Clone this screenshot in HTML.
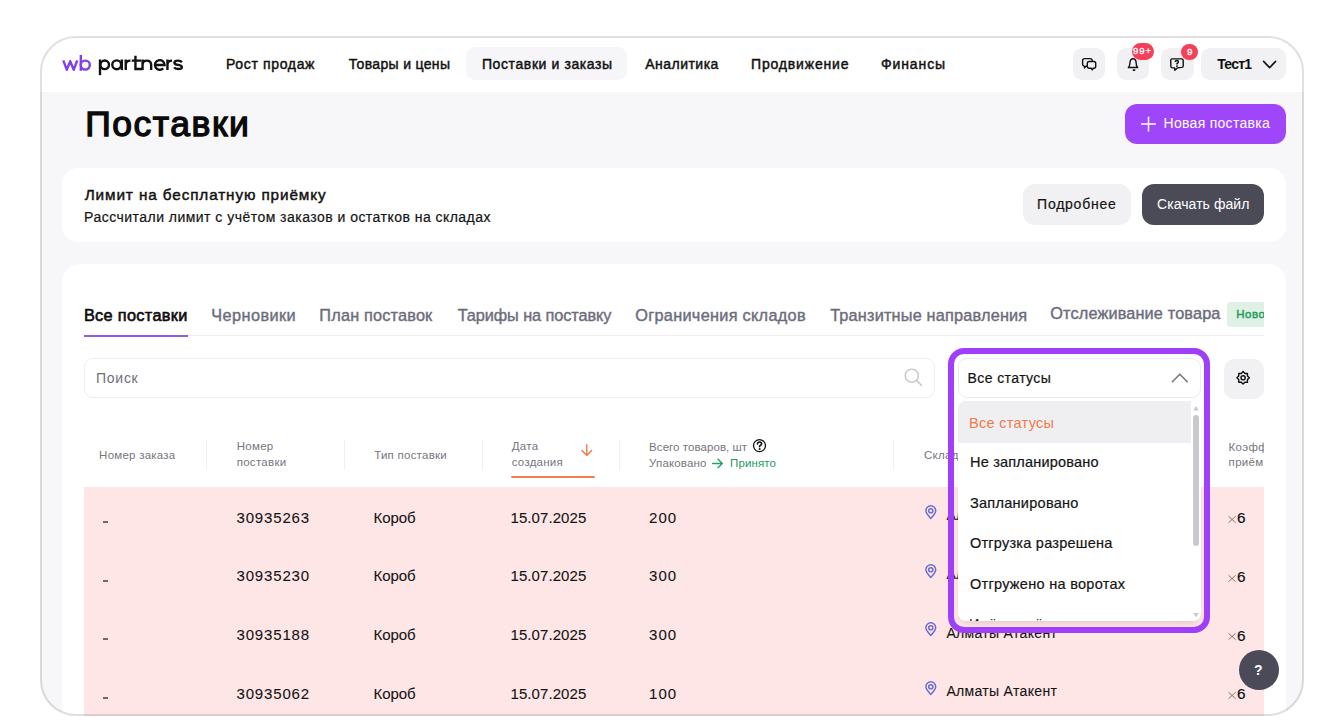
<!DOCTYPE html>
<html><head><meta charset="utf-8">
<style>
*{box-sizing:border-box;margin:0;padding:0}
html,body{width:1344px;height:724px;overflow:hidden;background:#fff}
body{position:relative;font-family:"Liberation Sans",sans-serif;color:#111}
.a{position:absolute;white-space:nowrap;line-height:1;z-index:5}
.b{position:absolute}
#clip{position:absolute;left:0;top:0;width:1344px;height:724px;background:#f7f7f9;clip-path:inset(36px 40px 8px 40px round 36px)}
#frameb{position:absolute;left:40px;top:36px;width:1264px;height:680px;border-radius:36px;border:2px solid rgba(0,0,0,0.12);z-index:60}
.nav{color:#111;-webkit-text-stroke:0.45px #111}
.userT{color:#111;font-weight:700}
.title{color:#0a0a0a;-webkit-text-stroke:1.3px #0a0a0a}
.wt{color:#fff}
.semi{color:#111;-webkit-text-stroke:0.45px #111}
.reg{color:#141414;-webkit-text-stroke:0.2px #141414}
.tab{color:#6c6c7c;-webkit-text-stroke:0.4px #6c6c7c}
.tabA{color:#0c0c0c;-webkit-text-stroke:0.6px #0c0c0c}
.ph{color:#6f6f78}
.ddA{color:#ef7b4c}
.th{color:#76767e}
.thG{color:#1c9a5e}
.cell{color:#141414;-webkit-text-stroke:0.1px #141414}
.cellB{color:#111;-webkit-text-stroke:0.2px #111}
.ib{position:absolute;background:#f1f1f3;border-radius:9px}
svg{position:absolute;overflow:visible}
</style></head><body>
<div id="clip">
  <!-- header -->
  <div class="b" style="left:40px;top:36px;width:1264px;height:56px;background:#fff"></div>
  <div class="b" style="left:466px;top:47px;width:161px;height:33px;background:#f6f6f8;border-radius:9px"></div>
  <div class="ib" style="left:1072.5px;top:48px;width:32.5px;height:32px"></div>
  <div class="ib" style="left:1117px;top:48px;width:32px;height:32px"></div>
  <div class="ib" style="left:1161px;top:48px;width:32.5px;height:32px"></div>
  <div class="ib" style="left:1201px;top:48px;width:85px;height:32px"></div>
  <!-- cards -->
  <div class="b" style="left:1125px;top:104px;width:161px;height:40px;background:#a046fa;border-radius:12px"></div>
  <div class="b" style="left:61.5px;top:168px;width:1224.5px;height:74px;background:#fff;border-radius:16px"></div>
  <div class="b" style="left:1022.5px;top:184px;width:108.5px;height:40.5px;background:#f1f1f3;border-radius:12px"></div>
  <div class="b" style="left:1142px;top:184px;width:122px;height:40.5px;background:#4b4b58;border-radius:12px"></div>
  <div class="b" style="left:62px;top:264px;width:1224px;height:500px;background:#fff;border-radius:18px"></div>
  <!-- tabs -->
  <div class="b" style="left:84px;top:335px;width:1180px;height:1px;background:#ededf0"></div>
  <div class="b" style="left:84px;top:334.5px;width:104px;height:2px;background:#8f5be8"></div>
  <div class="b" style="left:1226.5px;top:302px;width:37.5px;height:24.5px;background:#dff1e5;border-radius:4px 0 0 4px"></div>
  <div class="a" style="left:1236.3px;top:309px;font-size:11.5px;color:#1f9b5d;-webkit-text-stroke:0.45px #1f9b5d;letter-spacing:0.5px;width:27.7px;overflow:hidden">Новое</div>
  <!-- search -->
  <div class="b" style="left:84px;top:358px;width:851px;height:40px;background:#fff;border:1px solid #eeeef1;border-radius:9px"></div>
  <svg style="left:0;top:0" width="1" height="1"><circle cx="911.8" cy="375.7" r="6.6" fill="none" stroke="#c6c6ca" stroke-width="1.4"/><line x1="916.6" y1="380.5" x2="921.4" y2="385.3" stroke="#c6c6ca" stroke-width="1.5" stroke-linecap="round"/></svg>
  <!-- gear -->
  <div class="b" style="left:1224px;top:358.5px;width:40px;height:40px;background:#f1f1f3;border-radius:10px"></div>
  <!-- table header -->
  <div class="b" style="left:206px;top:440px;width:1px;height:30px;background:#f1f1f4"></div>
  <div class="b" style="left:343.5px;top:440px;width:1px;height:30px;background:#f1f1f4"></div>
  <div class="b" style="left:481.5px;top:440px;width:1px;height:30px;background:#f1f1f4"></div>
  <div class="b" style="left:619px;top:440px;width:1px;height:30px;background:#f1f1f4"></div>
  <div class="b" style="left:893px;top:440px;width:1px;height:30px;background:#f1f1f4"></div>
  <div class="b" style="left:511.2px;top:475.8px;width:83.5px;height:2px;background:#f08050;border-radius:1px"></div>
  <svg style="left:0;top:0" width="1" height="1">
    <path d="M586.8 444.8 V455.4 M582 450.6 L586.8 455.4 L591.6 450.6" fill="none" stroke="#f07a48" stroke-width="1.4" stroke-linecap="round" stroke-linejoin="round"/>
    <circle cx="759.5" cy="445.6" r="6" fill="none" stroke="#111" stroke-width="1.3"/>
    <path d="M757.5 444 Q757.6 442 759.6 442 Q761.6 442 761.6 443.9 Q761.5 445.2 759.6 446 V446.7" fill="none" stroke="#111" stroke-width="1.6" stroke-linecap="round"/>
    <circle cx="759.6" cy="449" r="1" fill="#111"/>
    <path d="M712.6 463.5 H722.3 M718 459.2 L722.3 463.5 L718 467.8" fill="none" stroke="#25a168" stroke-width="1.4" stroke-linecap="round" stroke-linejoin="round"/>
  </svg>
  <!-- rows -->
  <div class="b" style="left:84px;top:487px;width:1180px;height:240px;background:#ffe6e6"></div>
  <div class="b" style="left:103px;top:521px;width:5px;height:1.5px;background:#726670"></div>
<svg style="left:0;top:0.00px" width="1" height="1"><g fill="none" stroke="#646ad8" stroke-width="1.45"><path d="M930.8 518.4 C928.2 515.6 925.9 513.3 925.9 510.7 A4.9 4.9 0 0 1 935.7 510.7 C935.7 513.3 933.4 515.6 930.8 518.4 Z" stroke-linejoin="round"/><circle cx="930.8" cy="510.8" r="2.1"/></g></svg>
<svg style="left:0;top:0.00px" width="1" height="1"><path d="M1228.5 516.3 L1235.6 522.7 M1235.6 516.3 L1228.5 522.7" stroke="#75686e" stroke-width="0.9"/></svg>
<div class="b" style="left:103px;top:580px;width:5px;height:1.5px;background:#726670"></div>
<svg style="left:0;top:58.70px" width="1" height="1"><g fill="none" stroke="#646ad8" stroke-width="1.45"><path d="M930.8 518.4 C928.2 515.6 925.9 513.3 925.9 510.7 A4.9 4.9 0 0 1 935.7 510.7 C935.7 513.3 933.4 515.6 930.8 518.4 Z" stroke-linejoin="round"/><circle cx="930.8" cy="510.8" r="2.1"/></g></svg>
<svg style="left:0;top:58.70px" width="1" height="1"><path d="M1228.5 516.3 L1235.6 522.7 M1235.6 516.3 L1228.5 522.7" stroke="#75686e" stroke-width="0.9"/></svg>
<div class="b" style="left:103px;top:638px;width:5px;height:1.5px;background:#726670"></div>
<svg style="left:0;top:117.40px" width="1" height="1"><g fill="none" stroke="#646ad8" stroke-width="1.45"><path d="M930.8 518.4 C928.2 515.6 925.9 513.3 925.9 510.7 A4.9 4.9 0 0 1 935.7 510.7 C935.7 513.3 933.4 515.6 930.8 518.4 Z" stroke-linejoin="round"/><circle cx="930.8" cy="510.8" r="2.1"/></g></svg>
<svg style="left:0;top:117.40px" width="1" height="1"><path d="M1228.5 516.3 L1235.6 522.7 M1235.6 516.3 L1228.5 522.7" stroke="#75686e" stroke-width="0.9"/></svg>
<div class="b" style="left:103px;top:697px;width:5px;height:1.5px;background:#726670"></div>
<svg style="left:0;top:176.10px" width="1" height="1"><g fill="none" stroke="#646ad8" stroke-width="1.45"><path d="M930.8 518.4 C928.2 515.6 925.9 513.3 925.9 510.7 A4.9 4.9 0 0 1 935.7 510.7 C935.7 513.3 933.4 515.6 930.8 518.4 Z" stroke-linejoin="round"/><circle cx="930.8" cy="510.8" r="2.1"/></g></svg>
<svg style="left:0;top:176.10px" width="1" height="1"><path d="M1228.5 516.3 L1235.6 522.7 M1235.6 516.3 L1228.5 522.7" stroke="#75686e" stroke-width="0.9"/></svg>
  <div id="nav1" class="a nav" style="left:225.96px;top:56.97px;font-size:14px;letter-spacing:0.652px">Рост продаж</div>
<div id="nav2" class="a nav" style="left:348.84px;top:56.97px;font-size:14px;letter-spacing:0.327px">Товары и цены</div>
<div id="nav3" class="a nav" style="left:481.96px;top:56.97px;font-size:14px;letter-spacing:0.600px">Поставки и заказы</div>
<div id="nav4" class="a nav" style="left:645.22px;top:56.97px;font-size:14px;letter-spacing:0.480px">Аналитика</div>
<div id="nav5" class="a nav" style="left:751.08px;top:56.97px;font-size:14px;letter-spacing:0.812px">Продвижение</div>
<div id="nav6" class="a nav" style="left:880.88px;top:56.97px;font-size:14px;letter-spacing:0.913px">Финансы</div>
<div id="user" class="a userT" style="left:1217.26px;top:57.17px;font-size:14px;letter-spacing:-0.780px">Тест1</div>
<div id="title" class="a title" style="left:85.14px;top:106.96px;font-size:35.5px;letter-spacing:1.557px">Поставки</div>
<div id="btnnew" class="a wt" style="left:1163.62px;top:116.37px;font-size:14px;letter-spacing:0.275px">Новая поставка</div>
<div id="lim1" class="a semi" style="left:84.70px;top:186.82px;font-size:15.3px;letter-spacing:0.885px">Лимит на бесплатную приёмку</div>
<div id="lim2" class="a reg" style="left:84.11px;top:210.00px;font-size:14px;letter-spacing:0.469px">Рассчитали лимит с учётом заказов и остатков на складах</div>
<div id="more" class="a reg" style="left:1037.08px;top:197.23px;font-size:14px;letter-spacing:0.760px">Подробнее</div>
<div id="dl" class="a wt" style="left:1157.08px;top:197.23px;font-size:14px;letter-spacing:0.053px">Скачать файл</div>
<div id="tab1" class="a tabA" style="left:83.92px;top:307.44px;font-size:16.3px;letter-spacing:0.329px">Все поставки</div>
<div id="tab2" class="a tab" style="left:211.34px;top:307.44px;font-size:16.3px;letter-spacing:0.420px">Черновики</div>
<div id="tab3" class="a tab" style="left:319.34px;top:307.44px;font-size:16.3px;letter-spacing:0.180px">План поставок</div>
<div id="tab4" class="a tab" style="left:457.64px;top:307.44px;font-size:16.3px;letter-spacing:-0.076px">Тарифы на поставку</div>
<div id="tab5" class="a tab" style="left:635.34px;top:307.44px;font-size:16.3px;letter-spacing:0.291px">Ограничения складов</div>
<div id="tab6" class="a tab" style="left:830.14px;top:307.44px;font-size:16.3px;letter-spacing:0.186px">Транзитные направления</div>
<div id="tab7" class="a tab" style="left:1050.24px;top:305.44px;font-size:16.3px;letter-spacing:0.144px">Отслеживание товара</div>
<div id="search" class="a ph" style="left:96.12px;top:371.21px;font-size:14px;letter-spacing:0.700px">Поиск</div>
<div id="th1" class="a th" style="left:99.11px;top:449.93px;font-size:11.5px;letter-spacing:0.242px">Номер заказа</div>
<div id="th2a" class="a th" style="left:236.65px;top:441.33px;font-size:11.5px;letter-spacing:0.300px">Номер</div>
<div id="th2b" class="a th" style="left:236.65px;top:457.21px;font-size:11.5px;letter-spacing:0.300px">поставки</div>
<div id="th3" class="a th" style="left:374.19px;top:449.93px;font-size:11.5px;letter-spacing:0.242px">Тип поставки</div>
<div id="th4a" class="a th" style="left:511.76px;top:441.23px;font-size:11.5px;letter-spacing:0.300px">Дата</div>
<div id="th4b" class="a th" style="left:511.76px;top:457.21px;font-size:11.5px;letter-spacing:0.243px">создания</div>
<div id="th5a" class="a th" style="left:649.11px;top:442.49px;font-size:11.5px;letter-spacing:0.060px">Всего товаров, шт</div>
<div id="th5b" class="a th" style="left:649.11px;top:458.15px;font-size:11.5px;letter-spacing:0.140px">Упаковано</div>
<div id="th5c" class="a thG" style="left:730.11px;top:458.15px;font-size:11.5px;letter-spacing:0.087px">Принято</div>
<div id="th6" class="a th" style="left:924.03px;top:449.93px;font-size:11.5px;letter-spacing:0.300px">Склад</div>
<div id="th7a" class="a th" style="left:1228.61px;top:442.43px;font-size:11.5px;letter-spacing:0.300px">Коэфф</div>
<div id="th7b" class="a th" style="left:1228.61px;top:457.35px;font-size:11.5px;letter-spacing:0.300px">приём</div>
<div id="r1n" class="a cell" style="left:236.44px;top:509.57px;font-size:15px;letter-spacing:0.849px">30935263</div>
<div class="a cell" style="left:236.44px;top:568.27px;font-size:15px;letter-spacing:0.849px">30935230</div>
<div class="a cell" style="left:236.44px;top:626.97px;font-size:15px;letter-spacing:0.849px">30935188</div>
<div class="a cell" style="left:236.44px;top:685.67px;font-size:15px;letter-spacing:0.849px">30935062</div>
<div id="r1t" class="a cell" style="left:373.48px;top:509.68px;font-size:15px;letter-spacing:-0.060px">Короб</div>
<div class="a cell" style="left:373.48px;top:568.38px;font-size:15px;letter-spacing:-0.060px">Короб</div>
<div class="a cell" style="left:373.48px;top:627.08px;font-size:15px;letter-spacing:-0.060px">Короб</div>
<div class="a cell" style="left:373.48px;top:685.78px;font-size:15px;letter-spacing:-0.060px">Короб</div>
<div id="r1d" class="a cell" style="left:510.56px;top:509.57px;font-size:15px;letter-spacing:0.069px">15.07.2025</div>
<div class="a cell" style="left:510.56px;top:568.27px;font-size:15px;letter-spacing:0.069px">15.07.2025</div>
<div class="a cell" style="left:510.56px;top:626.97px;font-size:15px;letter-spacing:0.069px">15.07.2025</div>
<div class="a cell" style="left:510.56px;top:685.67px;font-size:15px;letter-spacing:0.069px">15.07.2025</div>
<div id="r1q" class="a cell" style="left:648.94px;top:509.57px;font-size:15px;letter-spacing:1.100px">200</div>
<div class="a cell" style="left:648.94px;top:568.27px;font-size:15px;letter-spacing:1.100px">300</div>
<div class="a cell" style="left:648.94px;top:626.97px;font-size:15px;letter-spacing:1.100px">300</div>
<div class="a cell" style="left:648.94px;top:685.67px;font-size:15px;letter-spacing:1.100px">100</div>
<div id="r1c" class="a cell" style="left:946.38px;top:508.31px;font-size:14px;letter-spacing:0.325px">Алматы Атакент</div>
<div class="a cell" style="left:946.38px;top:567.01px;font-size:14px;letter-spacing:0.325px">Алматы Атакент</div>
<div class="a cell" style="left:946.38px;top:625.71px;font-size:14px;letter-spacing:0.325px">Алматы Атакент</div>
<div class="a cell" style="left:946.38px;top:684.41px;font-size:14px;letter-spacing:0.325px">Алматы Атакент</div>
<div id="r1k" class="a cellB" style="left:1236.89px;top:510.38px;font-size:15.3px;letter-spacing:0.000px">6</div>
<div class="a cellB" style="left:1236.89px;top:569.08px;font-size:15.3px;letter-spacing:0.000px">6</div>
<div class="a cellB" style="left:1236.89px;top:627.78px;font-size:15.3px;letter-spacing:0.000px">6</div>
<div class="a cellB" style="left:1236.89px;top:686.48px;font-size:15.3px;letter-spacing:0.000px">6</div>
  <div class="b" style="left:1264px;top:340px;width:22px;height:400px;background:#fff;z-index:10"></div>
  <!-- help -->
  <div class="b" style="left:1238.5px;top:650px;width:40px;height:40px;border-radius:50%;background:#4a4a58;z-index:20"></div>
  <div class="a" style="left:1254px;top:663px;font-size:14px;font-weight:700;color:#fff;z-index:21">?</div>
</div>
<!-- logo -->
<svg style="left:0;top:0" width="1" height="1">
 <g fill="none" stroke="#8440e8" stroke-width="2.4" stroke-linejoin="round">
  <path d="M63.3 60.4 L66.8 69.8 L70.2 61.2 L73.7 69.8 L77.2 60.4"/>
  <path d="M80.8 55 V70.8"/>
  <circle cx="85.3" cy="65.1" r="4.5"/>
 </g>
 <g fill="none" stroke="#111" stroke-width="2.4">
  <path d="M100 59.5 V75.2"/>
  <circle cx="104.7" cy="64.8" r="4.3"/>
  <circle cx="116.7" cy="64.8" r="4.4"/>
  <path d="M121.85 59.5 V70.1"/>
  <path d="M125.75 70.1 V59.5 M125.75 65 Q125.75 60.6 130.4 60.6"/>
  <path d="M135.45 55.7 V69 H142.55 M131.7 60.6 H141"/>
  <path d="M142.55 70.1 V59.5 M142.55 65 Q142.55 60.6 146.85 60.6 Q151.15 60.6 151.15 65 V70.1"/>
  <path d="M154.9 65 H164.6 A4.85 4.85 0 1 0 163.2 68.4"/>
  <path d="M167.45 70.1 V59.5 M167.45 65 Q167.45 60.6 172.1 60.6"/>
  <path d="M181.8 62.3 Q180.8 60.6 178.1 60.6 Q174.4 60.6 174.4 62.8 Q174.4 64.5 178.2 64.9 Q181.9 65.3 181.9 67.3 Q181.9 69 178.1 69 Q175.2 69 174.1 67.4"/>
 </g>
</svg>
<!-- header icons -->
<svg style="left:0;top:0" width="1" height="1">
  <g fill="none" stroke="#111" stroke-width="1.4" stroke-linejoin="round">
    <path d="M1084.6 58.6 H1090.2 Q1092.2 58.6 1092.2 60.6 V61.5 M1087.3 66.2 H1085.8 L1084.6 67.9 L1084.2 66.1 Q1082.6 65.8 1082.6 64.2 V60.6 Q1082.6 58.6 1084.6 58.6"/>
    <path d="M1089.2 61.5 H1093.9 Q1095.7 61.5 1095.7 63.3 V66.3 Q1095.7 68.2 1093.9 68.2 H1093.2 L1092.3 69.9 L1091.2 68.2 H1089.2 Q1087.3 68.2 1087.3 66.3 V63.4 Q1087.3 61.5 1089.2 61.5 Z"/>
    <path d="M1127.8 67.5 H1138.3 M1128.7 67.3 Q1129.9 65.6 1130 62.6 Q1130.2 58.7 1133.05 58.7 Q1135.9 58.7 1136.1 62.6 Q1136.2 65.6 1137.4 67.3"/>
    <path d="M1172.1 58.9 H1181.8 Q1183.2 58.9 1183.2 60.3 V65.9 Q1183.2 67.2 1181.8 67.4 L1177.4 67.9 L1174.8 70.3 L1174.6 67.9 H1172.3 Q1171 67.9 1170.9 66.5 L1170.7 60.3 Q1170.7 58.9 1172.1 58.9 Z"/>
    <path d="M1175.2 61.9 Q1175.3 60.5 1176.9 60.5 Q1178.5 60.6 1178.4 62 Q1178.3 63 1176.9 63.6 V64.4" stroke-width="1.5"/>
    <path d="M1263.6 61.4 L1269.6 67.6 L1275.6 61.4" stroke-width="1.6" stroke-linecap="round"/>
  </g>
  <rect x="1132.6" y="69.2" width="2.8" height="1.8" rx="0.8" fill="#111"/>
  <circle cx="1176.9" cy="66.1" r="0.95" fill="#111"/>
</svg>
<div class="b" style="left:1131.5px;top:43px;width:22.5px;height:16.5px;border-radius:8.5px;background:#f5405a;z-index:7"></div>
<div class="a" style="left:1133px;top:45.8px;font-size:9.6px;color:#fff;-webkit-text-stroke:0.3px #fff;letter-spacing:0.9px;z-index:8">99+</div>
<div class="b" style="left:1181px;top:43.5px;width:16.7px;height:16.5px;border-radius:50%;background:#f5405a;z-index:7"></div>
<div class="a" style="left:1187.1px;top:47.4px;font-size:9.8px;color:#fff;-webkit-text-stroke:0.35px #fff;z-index:8">9</div>
<!-- plus -->
<svg style="left:0;top:0" width="1" height="1"><path d="M1148.5 116.8 V131.4 M1141.2 124.1 H1155.8" stroke="#fff" stroke-width="1.5"/></svg>
<!-- select + dropdown + highlight box -->
<div class="b" style="left:958px;top:358px;width:243px;height:40px;background:#fff;border:1px solid #ececef;border-radius:9px;z-index:30"></div>
<svg style="left:0;top:0;z-index:31" width="1" height="1"><path d="M1172.4 381.8 L1179.8 374.2 L1187.2 381.8" fill="none" stroke="#77777e" stroke-width="1.6" stroke-linecap="round" stroke-linejoin="round"/></svg>
<div class="b" style="left:958px;top:401px;width:243px;height:220px;background:#fff;border-radius:8px;box-shadow:0 5px 7px -3px rgba(60,40,50,0.16);z-index:30;overflow:hidden">
  <div class="b" style="left:0;top:0;width:233px;height:41.5px;background:#efeff2"></div>
  <div class="b" style="left:234.7px;top:14px;width:6.7px;height:131px;background:#c9c9cd;border-radius:3px"></div>
  <svg style="left:0;top:0" width="1" height="1"><path d="M235.2 9.4 L238 5 L240.8 9.4 Z" fill="#c9c9cd"/><path d="M235.2 212 L238 216.4 L240.8 212 Z" fill="#c9c9cd"/></svg>
  <div class="a" style="left:11px;top:216.2px;font-size:14.5px;color:#161616;letter-spacing:0.55px">Идёт приёмка</div>
</div>
<div id="sel" class="a reg" style="left:967.50px;top:370.55px;font-size:14px;letter-spacing:0.412px;z-index:35">Все статусы</div>
<div id="dd1" class="a ddA" style="left:969.09px;top:415.90px;font-size:14.5px;letter-spacing:0.284px;z-index:35">Все статусы</div>
<div id="dd2" class="a reg" style="left:970.05px;top:455.48px;font-size:14.5px;letter-spacing:0.199px;z-index:35">Не запланировано</div>
<div id="dd3" class="a reg" style="left:969.89px;top:495.50px;font-size:14.5px;letter-spacing:0.287px;z-index:35">Запланировано</div>
<div id="dd4" class="a reg" style="left:969.89px;top:536.46px;font-size:14.5px;letter-spacing:0.244px;z-index:35">Отгрузка разрешена</div>
<div id="dd5" class="a reg" style="left:969.89px;top:577.20px;font-size:14.5px;letter-spacing:0.292px;z-index:35">Отгружено на воротах</div>
<div class="b" style="left:948px;top:348px;width:262px;height:284.5px;border:6px solid #a03ffa;border-radius:16px;z-index:40"></div>
<svg style="left:0;top:0;z-index:31" width="1" height="1"><g fill="none" stroke="#111" stroke-width="1.4" stroke-linejoin="round"><circle cx="1243.1" cy="377.8" r="2.1"/><path d="M1243.10 371.60 L1244.90 373.46 L1247.48 373.42 L1247.44 376.00 L1249.30 377.80 L1247.44 379.60 L1247.48 382.18 L1244.90 382.14 L1243.10 384.00 L1241.30 382.14 L1238.72 382.18 L1238.76 379.60 L1236.90 377.80 L1238.76 376.00 L1238.72 373.42 L1241.30 373.46 Z"/></g></svg>
<div id="frameb"></div>
</body></html>
